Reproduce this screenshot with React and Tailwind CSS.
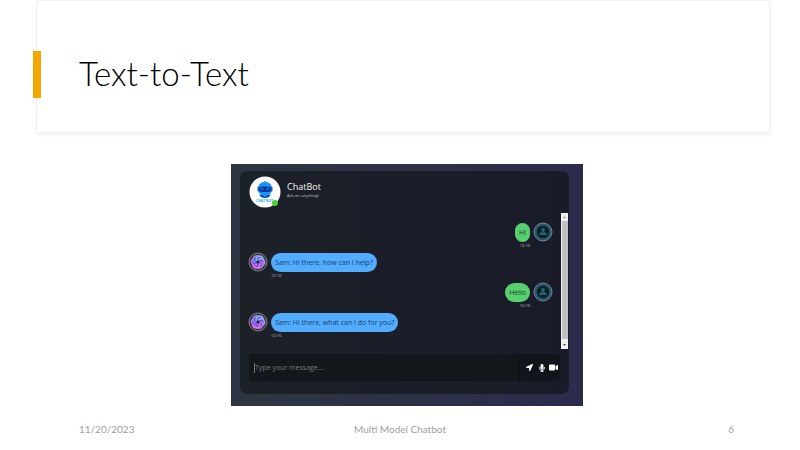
import { FaLocationArrow, FaMicrophone, FaVideo } from "react-icons/fa";

const messages = [
  { from: "user", text: "Hi", time: "12:10" },
  { from: "bot", text: "Sam: Hi there, how can I help?", time: "12:10" },
  { from: "user", text: "Hello", time: "12:10" },
  { from: "bot", text: "Sam: Hi there, what can I do for you?", time: "12:10" },
];

const petals = [
  { angle: 0, color: "#7fb6fb" },
  { angle: 60, color: "#9a9bfa" },
  { angle: 120, color: "#b574fa" },
  { angle: 180, color: "#dc7cff" },
  { angle: 240, color: "#b862fa" },
  { angle: 300, color: "#8488f8" },
];

function BotLogo() {
  return (
    <svg viewBox="0 0 32 32" className="size-8" aria-hidden="true">
      <circle cx="16" cy="16" r="15.5" fill="#fff" />
      <path d="M16 5v2" stroke="#0b6fe0" strokeWidth="1.2" />
      <path d="M9.500 11c0-3 2.500-5 6.500-5s6.500 2 6.500 5v4c0 2.500-2.500 4-6.500 4s-6.500-1.500-6.500-4z" fill="#1596f5" />
      <rect x="8.500" y="10.500" width="2.500" height="5" rx="1" fill="#0a5fc8" />
      <rect x="21" y="10.500" width="2.500" height="5" rx="1" fill="#0a5fc8" />
      <rect x="10.500" y="10.500" width="11" height="5.500" rx="2.600" fill="#0537a0" />
      <circle cx="13.500" cy="13" r="0.900" fill="#1596f5" />
      <circle cx="18.500" cy="13" r="0.900" fill="#1596f5" />
      <path d="M10.500 18c2 1.200 9 1.200 11 0 0 2.500-2 4-5.500 4s-5.500-1.500-5.500-4z" fill="#0b55bf" />
      <path d="M14 19.300h4l-2 1.500z" fill="#1fb4f7" />
      <text x="15.500" y="26.300" textAnchor="middle" fontSize="3.400" fontWeight="700" fontFamily="'Open Sans', sans-serif" fill="#22aef0">
        CHAT BOT
      </text>
    </svg>
  );
}

function BotAvatar() {
  return (
    <svg viewBox="0 0 20 20" className="size-5 shrink-0" aria-hidden="true">
      <circle cx="10" cy="10" r="9" fill="#3b3436" stroke="#96969a" strokeWidth="0.800" />
      <circle cx="10" cy="10" r="5.600" fill="#5a429c" />
      {petals.map(({ angle, color }) => (
        <path
          key={angle}
          transform={`rotate(${angle} 10 10)`}
          d="M8.300 8.300C7.800 5.600 9.600 4 11.900 4.200c1.500.1 2.500.9 3 2.100"
          fill="none"
          stroke={color}
          strokeWidth="1.900"
          strokeLinecap="round"
        />
      ))}
      <circle cx="10" cy="10" r="1.500" fill="#2b2541" />
    </svg>
  );
}

function UserAvatar() {
  return (
    <svg viewBox="0 0 20 20" className="size-5 shrink-0" aria-hidden="true">
      <circle cx="10" cy="10" r="9" fill="#275673" stroke="#8997a2" strokeWidth="0.800" />
      <circle cx="10" cy="10" r="6.200" fill="#08231f" />
      <circle cx="10" cy="8" r="1.900" fill="#2b607c" />
      <path d="M6.300 13v-.8c0-1.300 1-2 2.500-2h2.400c1.500 0 2.500.7 2.500 2v.8z" fill="#2b607c" />
    </svg>
  );
}

function Message({ from, text, time }) {
  const isUser = from === "user";
  return (
    <li className={isUser ? "flex flex-row-reverse gap-[3px]" : "flex gap-[3px]"}>
      <div className="-mt-px">{isUser ? <UserAvatar /> : <BotAvatar />}</div>
      <div className={isUser ? "flex flex-col items-end" : "flex flex-col items-start"}>
        <p
          className={
            isUser
              ? "rounded-[10px] bg-[#58cf71] px-1 text-[7px] leading-[19px] text-[#164428]"
              : "rounded-[10px] bg-[#52acff] px-1 text-[7px] leading-[19px] text-[#193f68]"
          }
        >
          {text}
        </p>
        <time className="text-[4px] leading-[7px] text-[#c4c5c9]">{time}</time>
      </div>
    </li>
  );
}

function Scrollbar() {
  return (
    <div className="flex w-[7px] flex-col items-center justify-between bg-[#f1f1f1]" aria-hidden="true">
      <svg viewBox="0 0 7 8" className="h-2 w-[7px]">
        <path d="M2 5l1.500-2L5 5z" fill="#999" />
      </svg>
      <div className="w-[6px] flex-1 bg-[#c1c1c1]" />
      <svg viewBox="0 0 7 10" className="h-[10px] w-[7px]">
        <path d="M2 5h3L3.500 7z" fill="#505050" />
      </svg>
    </div>
  );
}

function ChatWindow() {
  return (
    <div className="w-[44vw] bg-linear-to-r from-[#2d3640] to-[#2c2b4d] pt-[7px] pr-[14px] pb-3 pl-[9px] font-['Open_Sans','Noto_Sans',sans-serif]">
      <div className="rounded-[7px] bg-linear-to-r from-[#1c2027] to-[#1a1b29] pb-[13px]">
        <header className="flex h-[42px] gap-[6px] pt-[5px] pl-[9px]">
          <div className="relative size-8">
            <BotLogo />
            <span className="absolute right-[3px] bottom-[2px] size-[6px] rounded-full bg-[#4cd137]" />
          </div>
          <div className="pt-[5px]">
            <h2 className="text-[9px] leading-[11px] text-[#f3f4f6]">ChatBot</h2>
            <p className="text-[4px] leading-[7px] text-[#c4c5c9]">Ask me anything!</p>
          </div>
        </header>
        <div className="flex pr-px">
          <ul className="flex flex-1 flex-col gap-1 px-2 py-[10px]">
            {messages.map((message, index) => (
              <Message key={index} {...message} />
            ))}
          </ul>
          <Scrollbar />
        </div>
        <form className="mx-[9px] mt-[5px] flex h-[27px] overflow-hidden rounded-r-[5px] bg-[#13161a]" onSubmit={(event) => event.preventDefault()}>
          <div className="flex flex-1 items-center border-r border-[#0d0f14] pl-[5px]">
            <span className="h-[10px] w-px bg-[#777a7f]" />
            <input
              aria-label="Message"
              placeholder="Type your message..."
              className="w-full min-w-0 bg-transparent text-[7px] leading-[10px] text-white outline-none placeholder:text-[#777a7f]"
            />
          </div>
          <div className="flex w-10 items-center bg-[#12141c] pl-[6px] text-white">
            <button type="submit" aria-label="Send" className="mr-[5px]">
              <FaLocationArrow className="size-[7px]" />
            </button>
            <button type="button" aria-label="Record voice" className="mr-[3px]">
              <FaMicrophone className="size-2" />
            </button>
            <button type="button" aria-label="Start video">
              <FaVideo className="size-[9px]" />
            </button>
          </div>
        </form>
      </div>
    </div>
  );
}

export default function App() {
  return (
    <main className="flex min-h-screen flex-col bg-white font-[Lato,sans-serif]">
      <header className="relative mr-[30px] ml-9 flex h-[133px] items-center border border-[#f2f2f2] pt-3 pl-[42px] shadow-[1px_2px_3px_rgba(0,0,0,0.06)]">
        <span className="absolute top-[50px] -left-[4px] h-[47px] w-2 bg-[#f5a700]" />
        <h1 className="text-[33px] leading-10 font-light text-black">Text-to-Text</h1>
      </header>
      <section className="flex justify-center pt-[31px] pl-[14px]">
        <ChatWindow />
      </section>
      <footer className="grid grid-cols-3 px-[66px] pt-4 text-[10px] leading-[14px] text-[#a0a0a0]">
        <time className="pl-[13px]">11/20/2023</time>
        <p className="text-center">Multi Model Chatbot</p>
        <p className="text-right">6</p>
      </footer>
    </main>
  );
}
